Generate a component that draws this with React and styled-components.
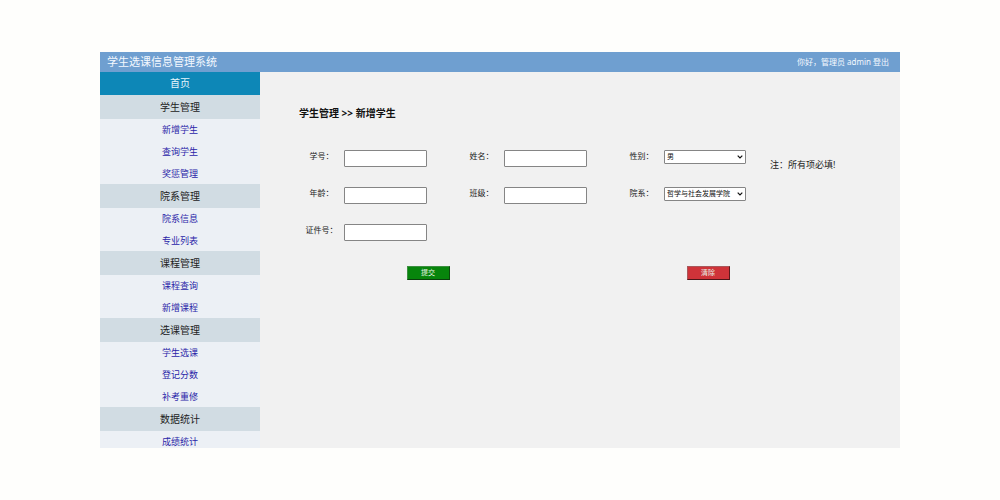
import React from "react";
import styled, { createGlobalStyle } from "styled-components";

const GlobalStyle = createGlobalStyle`
  * { box-sizing: border-box; }
  body {
    margin: 0;
    background: #fefefc;
    color: #222;
    font-family: "Noto Sans", "Noto Sans CJK SC", sans-serif;
    font-size: 8px;
  }
  input, select, button { font-family: inherit; }
`;

const Page = styled.div`
  min-height: 100vh;
  padding: 52px 10%;
`;

const Frame = styled.div`
  display: flex;
  flex-direction: column;
  height: calc(100vh - 104px);
  overflow: hidden;
  background: #f1f1f1;
`;

const Header = styled.header`
  display: flex;
  flex: none;
  align-items: center;
  justify-content: space-between;
  height: 20px;
  padding: 0 11px 0 7px;
  background: #6f9fd0;
  color: #f4f9ff;
`;

const SystemName = styled.h1`
  margin: 0;
  font-size: 11px;
  font-weight: 400;
  line-height: 20px;
`;

const Account = styled.div`
  font-size: 8px;
  line-height: 20px;
`;

const LogoutLink = styled.a`
  color: inherit;
  text-decoration: none;
`;

const Body = styled.div`
  display: flex;
  flex: 1;
  min-height: 0;
`;

const Sidebar = styled.nav`
  flex: none;
  width: 20%;
  overflow: hidden;
  background: #ecf0f5;
  text-align: center;
`;

const HomeLink = styled.a`
  display: block;
  background: #0d87b7;
  color: #e6f6fc;
  font-size: 10px;
  line-height: 23px;
  text-decoration: none;
`;

const GroupTitle = styled.h2`
  margin: 0;
  background: #d1dce3;
  color: #222;
  font-size: 10px;
  font-weight: 400;
  line-height: 24px;
`;

const MenuList = styled.ul`
  display: grid;
  gap: 1px;
  margin: 0;
  padding: 0;
  list-style: none;
`;

const MenuLink = styled.a`
  display: block;
  color: #2a25a8;
  font-size: 9px;
  line-height: 21px;
  text-decoration: none;
`;

const Main = styled.main`
  flex: 1;
  min-width: 0;
  padding-top: 33px;
`;

const Breadcrumb = styled.h2`
  margin: 0 0 29px;
  padding-left: 39px;
  color: #111;
  font-size: 10px;
  font-weight: 700;
  line-height: 16px;
`;

const FormBody = styled.div`
  display: flex;
  gap: 23px;
  padding-left: 39px;
`;

const Fields = styled.div`
  display: grid;
  grid-template-columns: repeat(3, 128px);
  gap: 20px 32px;
`;

const Field = styled.div`
  display: flex;
  align-items: flex-start;
  height: 17px;
`;

const Label = styled.label`
  flex: none;
  width: 45px;
  font-size: 8px;
  line-height: 12px;
  text-align: center;
`;

const TextInput = styled.input`
  width: 83px;
  height: 17px;
  padding: 0 3px;
  border: 1px solid #858585;
  border-radius: 1px;
  background: #fff;
  font-size: 8px;
`;

const SelectBox = styled.span`
  position: relative;
  display: block;
  width: 82px;
  height: 14px;
`;

const Select = styled.select`
  display: block;
  width: 100%;
  height: 14px;
  padding: 0 12px 0 2px;
  appearance: none;
  border: 1px solid #858585;
  border-radius: 1px;
  background: #fff;
  color: #111;
  font-size: 7px;
  line-height: 12px;
`;

const Chevron = styled.svg`
  position: absolute;
  top: 5px;
  right: 3px;
  width: 6px;
  height: 4px;
  pointer-events: none;
`;

const Note = styled.p`
  margin: 7px 0 0;
  font-size: 9px;
  line-height: 16px;
  white-space: nowrap;
`;

const Actions = styled.div`
  display: grid;
  grid-template-columns: 1fr 1fr;
  justify-items: center;
  margin-top: 25px;
  padding: 0 52px 0 28px;
`;

const ActionButton = styled.button`
  width: 43px;
  height: 14px;
  padding: 0;
  border: 1px solid;
  border-color: ${(p) => p.$edge};
  background: ${(p) => p.$fill};
  color: #e8f5e8;
  font-size: 7px;
  line-height: 12px;
`;

const menu = [
  { title: "学生管理", items: ["新增学生", "查询学生", "奖惩管理"] },
  { title: "院系管理", items: ["院系信息", "专业列表"] },
  { title: "课程管理", items: ["课程查询", "新增课程"] },
  { title: "选课管理", items: ["学生选课", "登记分数", "补考重修"] },
  { title: "数据统计", items: ["成绩统计"] },
];

const fields = [
  { id: "number", label: "学号：" },
  { id: "name", label: "姓名：" },
  { id: "gender", label: "性别：", options: ["男", "女"] },
  { id: "age", label: "年龄：" },
  { id: "class", label: "班级：" },
  { id: "department", label: "院系：", options: ["哲学与社会发展学院"] },
  { id: "idcard", label: "证件号：" },
];

function FormField({ id, label, options }) {
  return (
    <Field>
      <Label htmlFor={id}>{label}</Label>
      {options ? (
        <SelectBox>
          <Select id={id}>
            {options.map((o) => (
              <option key={o}>{o}</option>
            ))}
          </Select>
          <Chevron viewBox="0 0 6 4" aria-hidden="true">
            <path d="M0.7 0.7 L3 3 L5.3 0.7" fill="none" stroke="#111" strokeWidth="1.2" />
          </Chevron>
        </SelectBox>
      ) : (
        <TextInput id={id} type="text" />
      )}
    </Field>
  );
}

export default function App() {
  return (
    <Page lang="zh-CN">
      <GlobalStyle />
      <Frame>
        <Header>
          <SystemName>学生选课信息管理系统</SystemName>
          <Account>
            你好，管理员 admin <LogoutLink href="#logout">登出</LogoutLink>
          </Account>
        </Header>
        <Body>
          <Sidebar>
            <HomeLink href="#home">首页</HomeLink>
            {menu.map((group) => (
              <section key={group.title}>
                <GroupTitle>{group.title}</GroupTitle>
                <MenuList>
                  {group.items.map((item) => (
                    <li key={item}>
                      <MenuLink href="#menu">{item}</MenuLink>
                    </li>
                  ))}
                </MenuList>
              </section>
            ))}
          </Sidebar>
          <Main>
            <Breadcrumb>学生管理 &gt;&gt; 新增学生</Breadcrumb>
            <form onSubmit={(e) => e.preventDefault()}>
              <FormBody>
                <Fields>
                  {fields.map((f) => (
                    <FormField key={f.id} {...f} />
                  ))}
                </Fields>
                <Note>注：所有项必填!</Note>
              </FormBody>
              <Actions>
                <ActionButton type="submit" $fill="#07850c" $edge="#3c8f40 #0a4a0c #0a3f0c #3c8f40">
                  提交
                </ActionButton>
                <ActionButton type="reset" $fill="#cf3339" $edge="#a8585b #5c1a1d #4e1518 #a8585b">
                  清除
                </ActionButton>
              </Actions>
            </form>
          </Main>
        </Body>
      </Frame>
    </Page>
  );
}
